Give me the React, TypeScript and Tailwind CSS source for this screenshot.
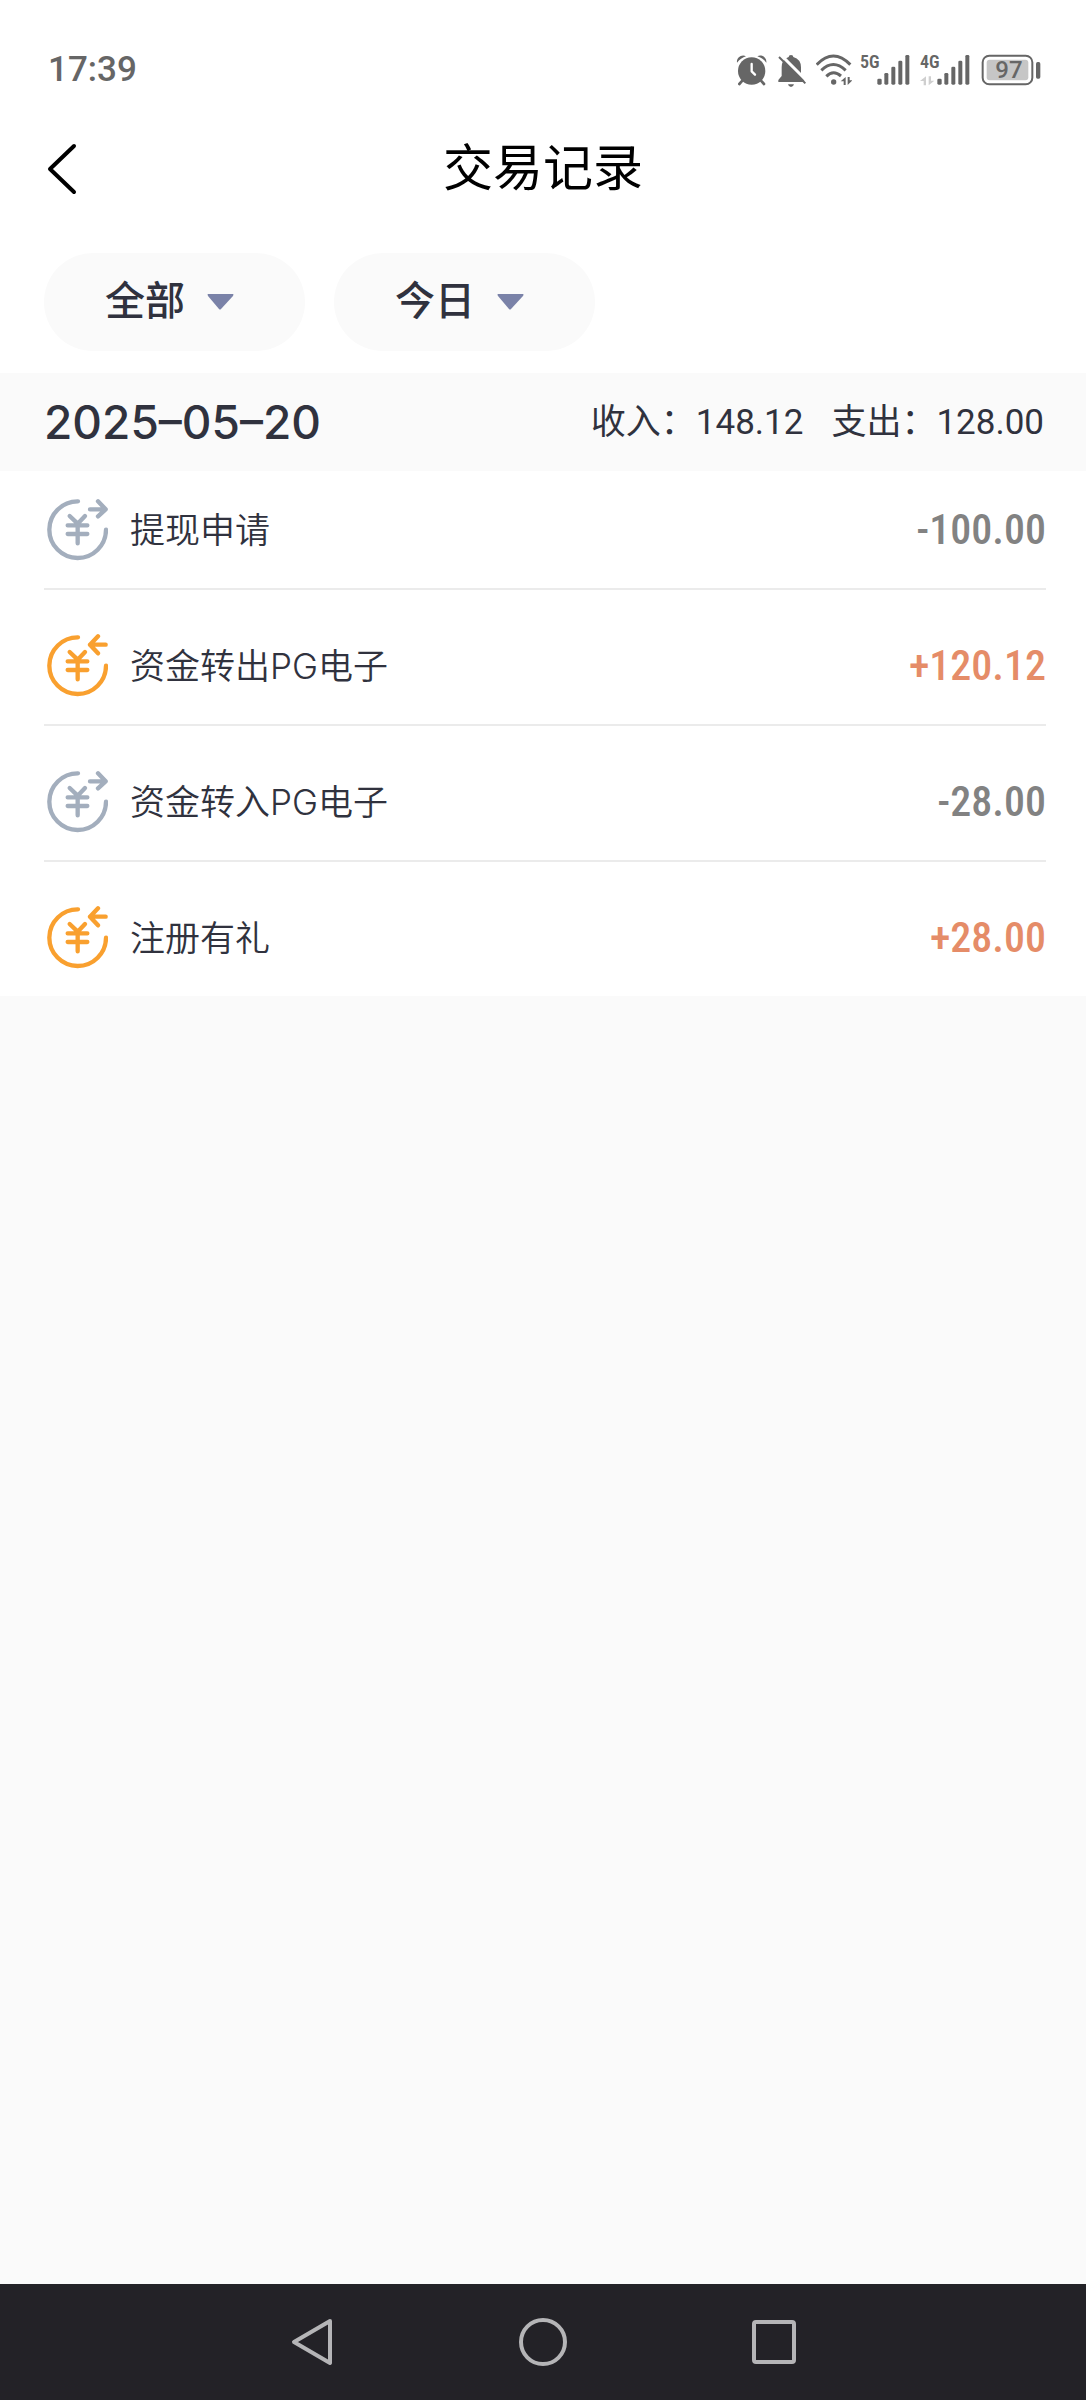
import type { ReactNode } from "react";

type Record = {
  title: string;
  amount: string;
  income: boolean;
};

const records: Record[] = [
  { title: "提现申请", amount: "-100.00", income: false },
  { title: "资金转出PG电子", amount: "+120.12", income: true },
  { title: "资金转入PG电子", amount: "-28.00", income: false },
  { title: "注册有礼", amount: "+28.00", income: true },
];

function AlarmIcon() {
  return (
    <svg viewBox="48 40 96 99" className="h-[33px] w-8" fill="currentColor" aria-hidden="true">
      <circle cx="95" cy="91" r="41" />
      <path d="M51 66C49 50 66 40 78 47C68 50 58 57 51 66Z" />
      <path d="M139 66C141 50 124 40 112 47C122 50 132 57 139 66Z" />
      <path d="M67 120L58 130M123 120L132 130" stroke="currentColor" strokeWidth="8" strokeLinecap="round" />
      <path d="M95 70V92L105 102" stroke="white" strokeWidth="7" fill="none" strokeLinecap="round" strokeLinejoin="round" />
    </svg>
  );
}

function MutedBellIcon() {
  return (
    <svg viewBox="168 40 96 99" className="h-[33px] w-8" fill="currentColor" aria-hidden="true">
      <path d="M206 49Q206 43 213 43Q220 43 220 49Q243 56 243 80V105L253 119V124H175V118L185 106V80Q185 56 206 49Z" />
      <path d="M204 131H222Q220 139 213 139Q206 139 204 131Z" />
      <path d="M181 41L264 124" stroke="white" strokeWidth="9" />
      <path d="M177 49L256 128" stroke="currentColor" strokeWidth="6" />
    </svg>
  );
}

function WifiIcon() {
  return (
    <svg viewBox="288 40 108 99" className="h-[33px] w-9" aria-hidden="true">
      <g fill="none" stroke="currentColor" strokeWidth="9">
        <path d="M290 72Q340 20 391 72" />
        <path d="M304 89Q340 54 377 89" />
        <path d="M319 107Q340 86 363 106" />
      </g>
      <circle cx="341" cy="124" r="8" fill="currentColor" />
      <path d="M362 122L377 109V133H371V122ZM383 109H389V119H397L383 133Z" fill="currentColor" />
    </svg>
  );
}

function Signal({ label, idle }: { label: string; idle?: boolean }) {
  return (
    <div className="relative h-[33px] w-[52px]">
      <svg viewBox="420 40 156 99" className="size-full" fill="currentColor" aria-hidden="true">
        <rect x="472" y="114" width="13" height="18" rx="4" />
        <rect x="493" y="97" width="12" height="35" rx="4" />
        <rect x="514" y="78" width="12" height="54" rx="4" />
        <rect x="535" y="60" width="12" height="72" rx="4" />
        <rect x="556" y="43" width="12" height="89" rx="4" />
        {idle && <path d="M420 121L438 107V134H431V121ZM446 107H453V120H463L446 134Z" fill="#cfcfcf" />}
      </svg>
      <span className="absolute left-0 top-0 font-['Roboto_Condensed','Liberation_Sans',sans-serif] text-[18px] leading-4 font-semibold">
        {label}
      </span>
    </div>
  );
}

function Battery() {
  return (
    <div className="relative h-[33px] w-[61px]">
      <svg viewBox="780 40 183 99" className="size-full" aria-hidden="true">
        <rect x="788" y="45" width="149" height="86" rx="20" fill="none" stroke="currentColor" strokeWidth="6" />
        <rect x="800" y="57" width="125" height="62" rx="9" fill="#c6c6c6" />
        <rect x="948" y="64" width="13" height="50" rx="5" fill="currentColor" />
      </svg>
      <span className="absolute inset-y-0 left-0 w-[58px] text-center text-[24px] leading-8 font-medium">97</span>
    </div>
  );
}

function YuanIcon({ income }: { income: boolean }) {
  return (
    <svg
      viewBox="44 54 192 192"
      className={income ? "size-16 text-[#f9a02f]" : "size-16 text-[#a3aebd]"}
      fill="none"
      stroke="currentColor"
      strokeWidth="13"
      strokeLinecap="round"
      strokeLinejoin="round"
      aria-hidden="true"
    >
      <path d="M146 64A85 85 0 1 0 230 149" />
      <path d="M121 108L145 131L167 108M145 131V190M115 136H174M115 162H174" />
      {income ? <path d="M229 86H182M206 61L182 86L206 112" /> : <path d="M182 88H229M206 64L229 88L206 109" />}
    </svg>
  );
}

function Filter({ label, options }: { label: string; options: string[] }) {
  return (
    <div className="relative h-[98px] w-[261px]">
      <select
        aria-label={label}
        className="size-full appearance-none rounded-full bg-[#fafafa] pl-[61px] text-[40px] font-medium text-[#30323e]"
      >
        {options.map((option) => (
          <option key={option}>{option}</option>
        ))}
      </select>
      <svg viewBox="0 0 27 16" className="pointer-events-none absolute left-[163px] top-[41px] h-4 w-[27px] fill-[#7a82a8]" aria-hidden="true">
        <path d="M1 0H26Q27 0 26 2L14 15Q13 16 12 15L1 2Q0 0 1 0Z" />
      </svg>
    </div>
  );
}

function NavButton({ label, children }: { label: string; children: ReactNode }) {
  return (
    <button type="button" aria-label={label} className="flex h-full w-[231px] items-center justify-center">
      <svg viewBox="0 0 48 48" className="size-12" fill="none" stroke="#b5b5b7" strokeWidth="4" strokeLinejoin="round">
        {children}
      </svg>
    </button>
  );
}

export default function App() {
  return (
    <div className="flex min-h-screen flex-col bg-[#fafafa] font-['Roboto','Noto_Sans_CJK_SC',sans-serif] text-[#30323e]">
      <div className="bg-white">
        {/* Status bar */}
        <div className="flex h-[92px] items-center justify-between pl-12 pr-[45px] pt-12 text-[#666666]">
          <span className="text-[35px] leading-10 font-medium">17:39</span>
          <div className="flex items-center gap-2">
            <AlarmIcon />
            <MutedBellIcon />
            <WifiIcon />
            <Signal label="5G" />
            <Signal label="4G" idle />
            <Battery />
          </div>
        </div>

        {/* Title bar */}
        <header className="relative flex h-[150px] items-center justify-center pt-1 text-black">
          <button type="button" aria-label="返回" className="absolute left-11 flex h-14 w-9 items-center justify-center">
            <svg viewBox="0 0 36 56" className="h-14 w-9" fill="none" stroke="currentColor" strokeWidth="4" strokeLinecap="round" strokeLinejoin="round">
              <path d="M30 5L6 28L30 51" />
            </svg>
          </button>
          <h1 className="text-[50px] leading-[60px] font-normal">交易记录</h1>
        </header>

        {/* Filters */}
        <div className="flex gap-[29px] px-11 pb-[22px] pt-[11px]">
          <Filter label="类型" options={["全部", "收入", "支出"]} />
          <Filter label="日期" options={["今日", "昨日", "近7日"]} />
        </div>
      </div>

      {/* Daily summary */}
      <div className="flex h-[98px] items-center justify-between pl-11 pr-[42px]">
        <h2 className="font-['Inter',sans-serif] text-[46px] leading-[60px] font-medium">2025–05–20</h2>
        <div className="flex gap-7 pt-0.5 text-[35px] leading-10">
          <span>收入：148.12</span>
          <span>支出：128.00</span>
        </div>
      </div>

      {/* Records */}
      <ul className="bg-white pl-11 pr-10">
        {records.map((record) => (
          <li
            key={record.title}
            className="flex items-center justify-between border-b-2 border-[#ebebeb] pb-[26px] pt-11 first:pt-[27px] last:border-b-0"
          >
            <div className="flex items-center gap-[22px]">
              <YuanIcon income={record.income} />
              <span className="font-['Inter','Noto_Sans_CJK_SC',sans-serif] text-[35px] leading-10 font-[350]">
                {record.title}
              </span>
            </div>
            <span
              className={`font-['Roboto_Condensed','Liberation_Sans',sans-serif] text-[42px] leading-[60px] font-medium ${
                record.income ? "text-[#e58c68]" : "text-[#828282]"
              }`}
            >
              {record.amount}
            </span>
          </li>
        ))}
      </ul>

      {/* System navigation */}
      <nav className="mt-auto flex h-[116px] items-center justify-center bg-[#232227]">
        <NavButton label="后退">
          <path d="M42 3L6 24L42 45Z" />
        </NavButton>
        <NavButton label="主页">
          <circle cx="24" cy="24" r="22" />
        </NavButton>
        <NavButton label="最近任务">
          <rect x="4" y="4" width="40" height="40" rx="2" />
        </NavButton>
      </nav>
    </div>
  );
}
